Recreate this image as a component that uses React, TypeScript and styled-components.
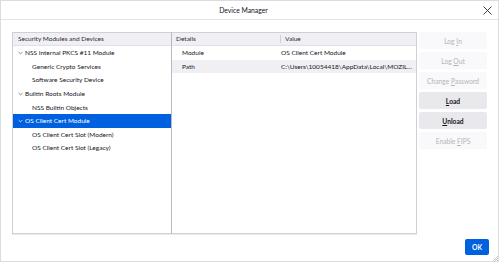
// Device Manager dialog

// ___________________________________________________________________

import * as React from 'react'
import styled, { createGlobalStyle } from 'styled-components'

// ___________________________________________________________________

const font = `Lato, "Liberation Sans", Arial, sans-serif`

const GlobalStyle = createGlobalStyle`
  html, body {
    margin: 0;
    padding: 0;
    background: #ffffff;
  }
  body {
    font-family: ${font};
    color: #15141a;
  }
`

type TreeItem = {
  label: string
  level: 0 | 1
  selected?: boolean
}

const tree: TreeItem[] = [
  { label: 'NSS Internal PKCS #11 Module', level: 0 },
  { label: 'Generic Crypto Services', level: 1 },
  { label: 'Software Security Device', level: 1 },
  { label: 'Builtin Roots Module', level: 0 },
  { label: 'NSS Builtin Objects', level: 1 },
  { label: 'OS Client Cert Module', level: 0, selected: true },
  { label: 'OS Client Cert Slot (Modern)', level: 1 },
  { label: 'OS Client Cert Slot (Legacy)', level: 1 }
]

const details = [
  { name: 'Module', value: 'OS Client Cert Module' },
  { name: 'Path', value: 'C:\\Users\\10054418\\AppData\\Local\\MOZILL~1\\FIREFOX\\osclientcerts.dll' }
]

const actions = [
  { label: 'Log In', key: 'I', enabled: false },
  { label: 'Log Out', key: 'O', enabled: false },
  { label: 'Change Password', key: 'P', enabled: false },
  { label: 'Load', key: 'L', enabled: true },
  { label: 'Unload', key: 'U', enabled: true },
  { label: 'Enable FIPS', key: 'F', enabled: false }
]

const Mnemonic: React.FC<{ label: string; k: string }> = ({ label, k }) => {
  const i = label.indexOf(k)
  if (i < 0) return <span>{label}</span>
  return (
    <span>
      {label.slice(0, i)}
      <u>{label[i]}</u>
      {label.slice(i + 1)}
    </span>
  )
}

const Chevron: React.FC<{ color: string }> = ({ color }) => (
  <svg width="5" height="4" viewBox="0 0 5 4">
    <path d="M0.6 1 L2.5 2.9 L4.4 1" fill="none" stroke={color} strokeWidth="0.7" />
  </svg>
)

const App: React.FC = () => (
  <>
    <GlobalStyle />
    <Window>
      <TitleBar>
        <Title>Device Manager</Title>
        <Close>
          <svg width="9" height="9" viewBox="0 0 9 9">
            <path d="M0.5 0.5 L8.5 8.5 M8.5 0.5 L0.5 8.5" stroke="#2b2a33" strokeWidth="0.9" />
          </svg>
        </Close>
      </TitleBar>

      <Body>
        <Panels>
          <TreePanel>
            <Header>Security Modules and Devices</Header>
            {tree.map(item => (
              <TreeRow key={item.label} level={item.level} selected={!!item.selected}>
                {item.level === 0 && (
                  <Twisty>
                    <Chevron color={item.selected ? '#ffffff' : '#5b5b66'} />
                  </Twisty>
                )}
                <span>{item.label}</span>
              </TreeRow>
            ))}
          </TreePanel>

          <DetailsPanel>
            <DetailsHeader>
              <Col>Details</Col>
              <ValueCol>Value</ValueCol>
            </DetailsHeader>
            {details.map((d, i) => (
              <DetailRow key={d.name} striped={i % 2 === 1}>
                <NameCell>{d.name}</NameCell>
                <ValueCell>{d.value}</ValueCell>
              </DetailRow>
            ))}
          </DetailsPanel>

          <Actions>
            {actions.map(a => (
              <ActionButton key={a.label} enabled={a.enabled}>
                <Mnemonic label={a.label} k={a.key} />
              </ActionButton>
            ))}
          </Actions>
        </Panels>

        <Footer>
          <OkButton>OK</OkButton>
        </Footer>
      </Body>

      <Grip>
        <svg width="6" height="6" viewBox="0 0 6 6">
          <path d="M6 1 L1 6 M6 3 L3 6 M6 5 L5 6" stroke="#9a9aa0" strokeWidth="0.6" />
        </svg>
      </Grip>
    </Window>
  </>
)

export default App

// ___________________________________________________________________

const Window = styled.div`
  position: relative;
  box-sizing: border-box;
  width: 499px;
  height: 262px;
  border: 1px solid #dcdcdf;
  background: #ffffff;
  display: flex;
  flex-direction: column;
`

const TitleBar = styled.div`
  position: relative;
  height: 18px;
  padding-right: 12px;
  border-bottom: 1px solid #e4e4e7;
  display: flex;
  align-items: center;
  justify-content: center;
`

const Title = styled.div`
  font-size: 6.8px;
  color: #15141a;
`

const Close = styled.div`
  position: absolute;
  right: 6px;
  top: 5px;
  width: 9px;
  height: 9px;
  display: flex;
`

const Body = styled.div`
  flex: 1;
  display: flex;
  flex-direction: column;
  padding: 12px 9px 6px 11px;
`

const Panels = styled.div`
  display: flex;
  height: 202px;
`

const Panel = styled.div`
  box-sizing: border-box;
  height: 100%;
  border: 1px solid #cfcfd8;
  box-shadow: 0 1px 0 #ececef;
  font-size: 6.5px;
  overflow: hidden;
`

const TreePanel = styled(Panel)`
  width: 160px;
  border-right: 1px solid #b9b9c0;
`

const Header = styled.div`
  height: 12px;
  line-height: 12px;
  padding-left: 5px;
  background: #f0f0f4;
  border-bottom: 1px solid #e0e0e6;
  color: #2b2a33;
`

const TreeRow = styled.div<{ level: 0 | 1; selected: boolean }>`
  display: flex;
  align-items: center;
  height: 13.6px;
  padding-left: ${p => (p.level === 0 ? '5px' : '19px')};
  background: ${p => (p.selected ? '#0061e0' : 'transparent')};
  color: ${p => (p.selected ? '#ffffff' : '#15141a')};
  white-space: nowrap;
`

const Twisty = styled.span`
  display: inline-flex;
  width: 6px;
  margin-right: 1px;
`

const DetailsPanel = styled(Panel)`
  width: 245px;
  border-left: none;
`

const DetailsHeader = styled.div`
  display: flex;
  height: 12px;
  line-height: 12px;
  background: #f0f0f4;
  border-bottom: 1px solid #e0e0e6;
  color: #2b2a33;
`

const Col = styled.div`
  width: 108px;
  padding-left: 4px;
  box-sizing: border-box;
`

const ValueCol = styled.div`
  flex: 1;
  padding-left: 4px;
  border-left: 1px solid #cfcfd8;
  margin: 2px 0;
  line-height: 8px;
`

const DetailRow = styled.div<{ striped: boolean }>`
  display: flex;
  height: 13.6px;
  line-height: 13.6px;
  background: ${p => (p.striped ? '#f0f0f4' : 'transparent')};
  color: #15141a;
`

const NameCell = styled.div`
  width: 109px;
  padding-left: 10px;
  box-sizing: border-box;
`

const ValueCell = styled.div`
  flex: 1;
  min-width: 0;
  padding-right: 2px;
  white-space: nowrap;
  overflow: hidden;
  text-overflow: ellipsis;
`

const Actions = styled.div`
  width: 68px;
  margin-left: 2px;
  display: flex;
  flex-direction: column;
  gap: 3px;
`

const ActionButton = styled.div<{ enabled: boolean }>`
  height: 17px;
  border-radius: 2px;
  display: flex;
  align-items: center;
  justify-content: center;
  white-space: nowrap;
  font-size: 6.7px;
  background: ${p => (p.enabled ? '#e9e9ed' : '#f9f9fb')};
  color: ${p => (p.enabled ? '#15141a' : '#b3b3ba')};
  font-weight: ${p => (p.enabled ? 700 : 400)};

  u {
    text-decoration-thickness: 0.5px;
    text-underline-offset: 1px;
  }
`

const Footer = styled.div`
  flex: 1;
  display: flex;
  justify-content: flex-end;
  align-items: flex-end;
`

const OkButton = styled.div`
  width: 24px;
  height: 16px;
  border-radius: 2px;
  background: #0061e0;
  color: #ffffff;
  font-size: 6.7px;
  font-weight: 700;
  display: flex;
  align-items: center;
  justify-content: center;
`

const Grip = styled.div`
  position: absolute;
  right: 0;
  bottom: 0;
  width: 6px;
  height: 6px;
  display: flex;
`
